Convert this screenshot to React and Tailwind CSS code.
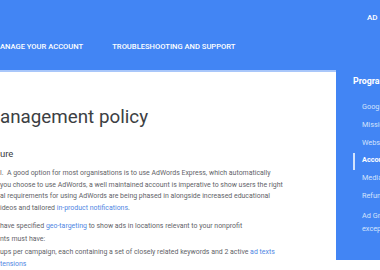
import React from 'react';

const sideItems = [
  { label: 'Google', active: false },
  { label: 'Mission', active: false },
  { label: 'Website', active: false },
  { label: 'Account', active: true },
  { label: 'Media', active: false },
  { label: 'Refunds', active: false },
];

const Link = ({ children }) => <span className="text-[#4f86e3]">{children}</span>;

const App = () => {
  return (
    <div
      className="w-[380px] h-[270px] overflow-hidden bg-white flex flex-col"
      style={{ fontFamily: 'Roboto, "Liberation Sans", sans-serif' }}
    >
      {/* header */}
      <div className="h-[70px] shrink-0 bg-[#4285f4] flex flex-col">
        <div className="h-[34px] flex items-center pl-[367px] overflow-hidden">
          <span className="text-white font-medium text-[8px] whitespace-nowrap pt-[1px]">
            AD&nbsp;&nbsp;GRANTS
          </span>
        </div>
        <div className="flex items-center h-[26px] text-white font-medium text-[7.6px] whitespace-nowrap">
          <span>ANAGE YOUR ACCOUNT</span>
          <span className="ml-[29px]">TROUBLESHOOTING AND SUPPORT</span>
        </div>
      </div>

      <div className="flex flex-1">
        {/* main content */}
        <div className="flex-1 border-t-2 border-[#a9c7fa] text-[#5f6368] whitespace-nowrap overflow-hidden">
          <h1 className="text-[18.8px] leading-[22px] text-[#3c4043] mt-[34px]">anagement policy</h1>
          <h3 className="text-[9.5px] leading-[12px] text-[#3c4043] mt-[20px]">ure</h3>

          <div className="text-[6.95px] leading-[11.5px] mt-[8px]">
            <p>l.&nbsp; A good option for most organisations is to use AdWords Express, which automatically</p>
            <p>you choose to use AdWords, a well maintained account is imperative to show users the right</p>
            <p>al requirements for using AdWords are being phased in alongside increased educational</p>
            <p>
              ideos and tailored <Link>in-product notifications</Link>.
            </p>
          </div>

          <div className="text-[6.95px] leading-[12.8px] mt-[6px]">
            <p>
              have specified <Link>geo-targeting</Link> to show ads in locations relevant to your nonprofit
            </p>
            <p>nts must have:</p>
            <p>
              ups per campaign, each containing a set of closely related keywords and 2 active <Link>ad texts</Link>
            </p>
            <p>
              <Link>tensions</Link>
            </p>
          </div>
        </div>

        {/* sidebar */}
        <div className="w-[44px] h-[190px] shrink-0 bg-[#4285f4] overflow-hidden whitespace-nowrap pl-[17px]">
          <div className="text-white font-bold text-[8.8px] leading-[10px] mt-[6px]">Programs</div>
          <div className="mt-[13px] text-[7.3px]">
            {sideItems.map((it) => (
              <div key={it.label} className="relative h-[17.7px] flex items-center pl-[9px]">
                {it.active && (
                  <span className="absolute left-0 top-[1px] bottom-[0px] w-[1.5px] bg-[#d2e3fc]" />
                )}
                <span className={it.active ? 'text-white font-bold' : 'text-[#d2e3fc]'}>{it.label}</span>
              </div>
            ))}
            <div className="pl-[9px] text-[#d2e3fc] leading-[13px] mt-[4px]">
              <div>Ad Grants</div>
              <div>exceptions</div>
            </div>
          </div>
        </div>
      </div>
    </div>
  );
};

export default App;
